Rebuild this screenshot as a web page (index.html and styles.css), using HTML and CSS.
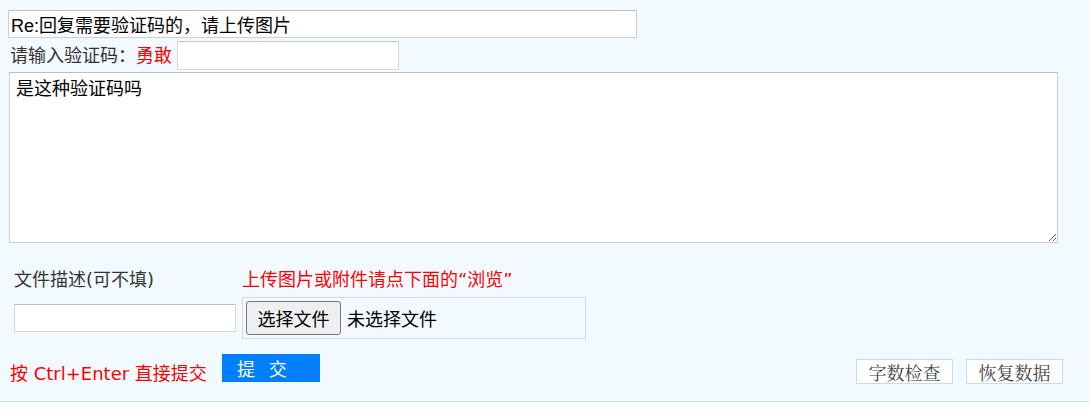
FILE: index.html
```html
<!DOCTYPE html>
<html lang="zh-CN">
<head>
<meta charset="utf-8">
<title>回复</title>
<link rel="stylesheet" href="styles.css">
</head>
<body>
<form class="reply">
  <input class="title-input" type="text" value="Re:回复需要验证码的，请上传图片">
  <div class="captcha-row">
    <span class="label">请输入验证码：</span><span class="code">勇敢</span>
    <input class="captcha-input" type="text">
  </div>
  <textarea class="content">是这种验证码吗</textarea>
  <div class="upload">
    <div class="upload-col desc-col">
      <div class="upload-label">文件描述(可不填)</div>
      <div class="upload-field"><input class="desc-input" type="text"></div>
    </div>
    <div class="upload-col file-col">
      <div class="upload-label red">上传图片或附件请点下面的“浏览”</div>
      <div class="upload-field">
        <div class="file-box">
          <span class="file-btn">选择文件</span><span class="file-none">未选择文件</span>
        </div>
      </div>
    </div>
  </div>
  <div class="submit-row">
    <span class="hint">按 Ctrl+Enter 直接提交</span>
    <span class="submit">提 交</span>
    <div class="tools">
      <span class="tool-btn">字数检查</span>
      <span class="tool-btn">恢复数据</span>
    </div>
  </div>
</form>
</body>
</html>
```

FILE: styles.css
```css
html, body {
  margin: 0;
  padding: 0;
  background: #ffffff;
}

body {
  font-family: "DejaVu Sans", "Noto Sans CJK SC", sans-serif;
  font-size: 18px;
  color: #333333;
}

.reply {
  display: flex;
  flex-direction: column;
  align-items: flex-start;
  background: #f3faff;
  border-bottom: 1px solid #c7e2f0;
  padding: 10px 0 0 8px;
  height: 402px;
  box-sizing: border-box;
}

.title-input {
  box-sizing: border-box;
  width: 629px;
  height: 28px;
  margin: 0;
  padding: 0 2px;
  border: 1px solid #cfcfcf;
  border-top-color: #bdbdbd;
  background: #fff;
  font-family: "Liberation Sans", "Noto Sans CJK SC", sans-serif;
  font-size: 18px;
  color: #000;
  outline: none;
}

.captcha-row {
  display: flex;
  align-items: center;
  margin-top: 3px;
  height: 29px;
  padding-left: 2px;
  flex: none;
}

.label {
  line-height: 29px;
}

.code {
  color: #ff0000;
  line-height: 29px;
}

.captcha-input {
  box-sizing: border-box;
  width: 222px;
  height: 29px;
  margin: 0 0 0 5px;
  border: 1px solid #d6d6d6;
  border-top-color: #c4c4c4;
  background: #fff;
  outline: none;
}

.content {
  box-sizing: border-box;
  width: 1049px;
  height: 171px;
  flex: none;
  margin: 2px 0 0 1px;
  padding: 4px 6px;
  border: 1px solid #cccccc;
  border-top-color: #bdbdbd;
  background: #fff;
  font-family: "DejaVu Sans", "Noto Sans CJK SC", sans-serif;
  font-size: 18px;
  line-height: 24px;
  color: #000;
  outline: none;
  resize: both;
}

.upload {
  display: flex;
  gap: 6px;
  margin: 25px 0 0 6px;
  flex: none;
}

.upload-col {
  display: flex;
  flex-direction: column;
}

.desc-col {
  width: 222px;
}

.file-col {
  width: 344px;
}

.upload-label {
  height: 24px;
  line-height: 24px;
  white-space: nowrap;
  margin-bottom: 5px;
  color: #333;
}

.upload-label.red {
  color: #ff0000;
}

.upload-field {
  height: 42px;
  display: flex;
  align-items: center;
}

.desc-input {
  box-sizing: border-box;
  width: 222px;
  height: 28px;
  margin: 0;
  border: 1px solid #d6d6d6;
  border-top-color: #c0c0c0;
  background: #fff;
  outline: none;
}

.file-box {
  box-sizing: border-box;
  width: 344px;
  height: 42px;
  border: 1px solid #d8d8d8;
  display: flex;
  align-items: center;
  padding-left: 3px;
  color: #000;
}

.file-btn {
  box-sizing: border-box;
  width: 95px;
  height: 34px;
  display: flex;
  align-items: center;
  justify-content: center;
  border: 1px solid #767676;
  border-radius: 3px;
  background: #efefef;
  color: #000;
}

.file-none {
  margin-left: 6px;
}

.submit-row {
  display: flex;
  align-items: flex-start;
  width: 1055px;
  margin: 15px 0 0 2px;
  flex: none;
}

.hint {
  color: #ff0000;
  line-height: 24px;
  margin-top: 8px;
  white-space: nowrap;
  width: 212px;
  flex: none;
}

.submit {
  width: 98px;
  height: 28px;
  background: #0080ff;
  color: #fff;
  display: flex;
  align-items: center;
  justify-content: flex-start;
  letter-spacing: 4px;
  padding-left: 15px;
  box-sizing: border-box;
}

.tools {
  display: flex;
  gap: 13px;
  margin-left: auto;
  margin-top: 5px;
  margin-right: 2px;
}

.tool-btn {
  box-sizing: border-box;
  width: 97px;
  height: 25px;
  border: 1px solid #c0deec;
  background: #fff;
  display: flex;
  align-items: center;
  justify-content: center;
  font-family: "Noto Serif CJK SC", "AR PL UMing CN", "Liberation Serif", "Noto Sans CJK SC", serif;
  font-size: 18px;
  color: #444;
}
```
